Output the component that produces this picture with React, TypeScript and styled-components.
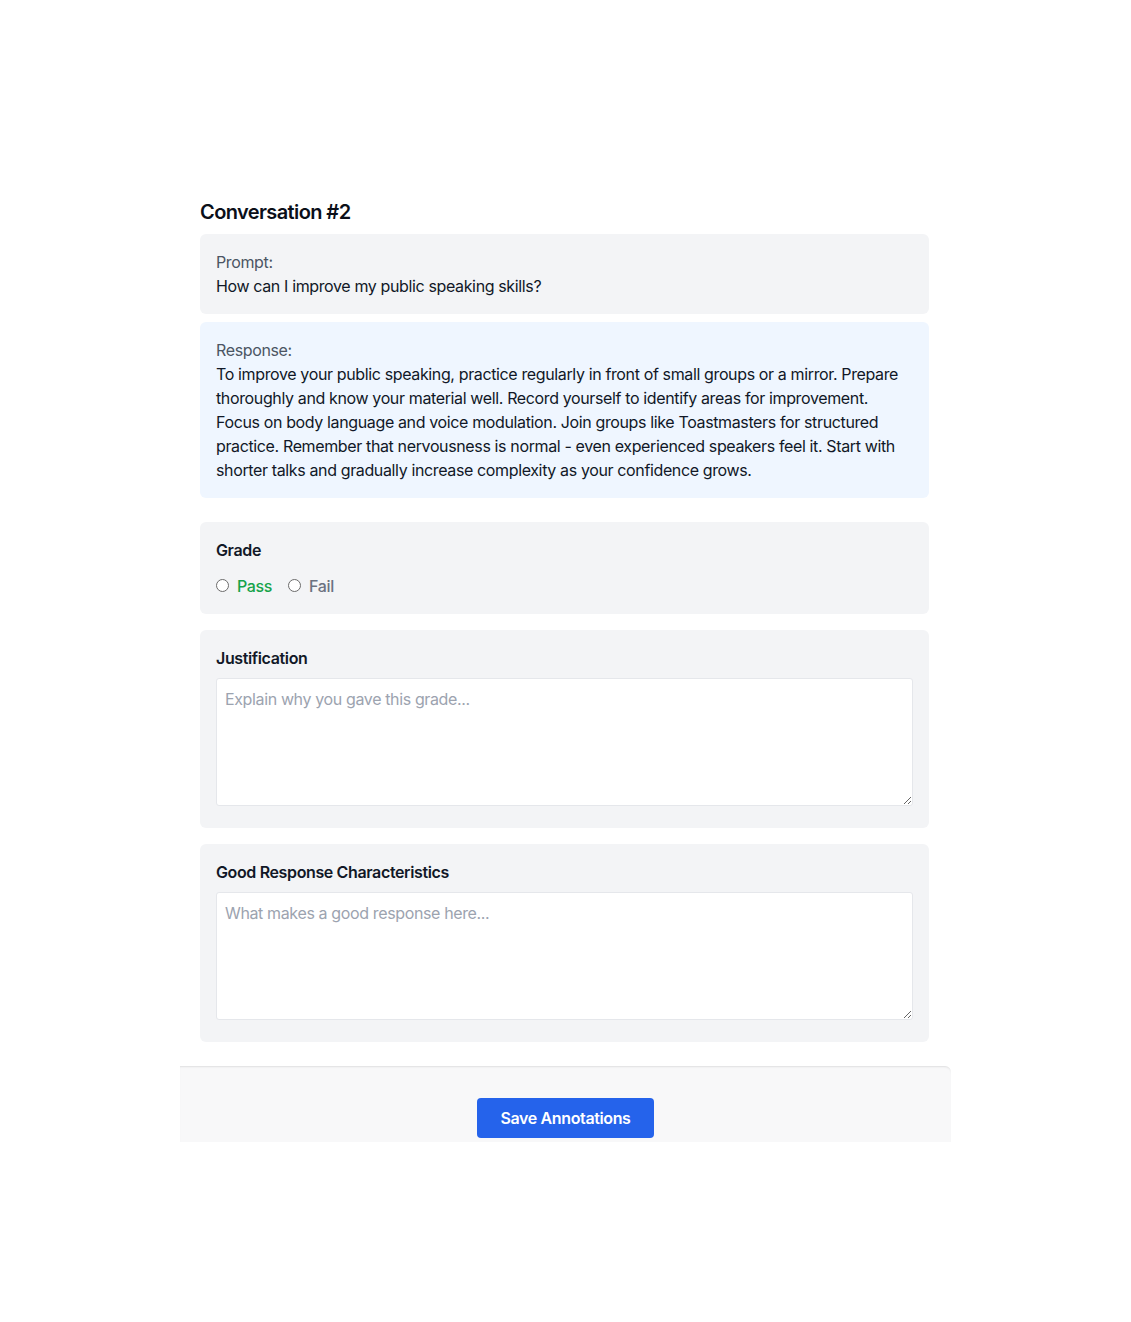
import React from "react";
import styled, { createGlobalStyle } from "styled-components";

const Global = createGlobalStyle`
  html, body { margin: 0; padding: 0; background: #ffffff; }
  body { font-family: Inter, "Noto Sans", sans-serif; color: #111827; -webkit-font-smoothing: antialiased; letter-spacing: -0.023em; }
  * { box-sizing: border-box; }
`;

const Page = styled.div`
  min-height: 100vh;
  padding-bottom: 2px;
  display: flex;
  flex-direction: column;
  align-items: center;
  justify-content: center;
`;

const Shell = styled.div`
  width: 771px;
  display: flex;
  flex-direction: column;
`;

const Card = styled.div`
  background: #ffffff;
  border-radius: 8px;
  padding: 19px 22px 24px 20px;
  display: flex;
  flex-direction: column;
`;

const Title = styled.h2`
  margin: 0 0 8px;
  font-size: 20px;
  line-height: 28px;
  font-weight: 600;
  letter-spacing: -0.03em;
  color: #0b0f19;
`;

const Block = styled.div<{ $tone?: "gray" | "blue"; $gap?: number; $padBottom?: number }>`
  background: ${(p) => (p.$tone === "blue" ? "#eff6ff" : "#f3f4f6")};
  border-radius: 6px;
  padding: 16px 16px ${(p) => p.$padBottom ?? 16}px;
  margin-top: ${(p) => p.$gap ?? 0}px;
  font-size: 16px;
  line-height: 24px;
`;

const Caption = styled.div`
  color: #4b5563;
`;

const Body = styled.div`
  color: #111827;
`;

const FieldLabel = styled.div<{ $mb: number }>`
  font-weight: 600;
  font-size: 16px;
  line-height: 24px;
  color: #111827;
  margin-bottom: ${(p) => p.$mb}px;
`;

const Radios = styled.div`
  display: flex;
  align-items: center;
  gap: 16px;
`;

const RadioLabel = styled.label<{ $color: string }>`
  display: flex;
  align-items: center;
  gap: 8px;
  font-weight: 500;
  color: ${(p) => p.$color};
  cursor: pointer;
`;

const Radio = styled.input`
  appearance: none;
  width: 13px;
  height: 13px;
  margin: 0;
  border: 1px solid #6b6b6b;
  border-radius: 50%;
  background: #fff;
`;

const TextArea = styled.textarea`
  display: block;
  width: 100%;
  height: 128px;
  border: 1px solid #e5e7eb;
  border-radius: 3px;
  padding: 8px;
  font-family: Inter, "Noto Sans", sans-serif;
  font-size: 16px;
  line-height: 24px;
  letter-spacing: -0.023em;
  color: #111827;
  background: #fff;
  resize: vertical;
  outline: none;
  &::placeholder { color: #9ca3af; }
`;

const Footer = styled.div`
  height: 76px;
  background: #f8f8f9;
  box-shadow: inset 0 2px 2px -1px rgba(0, 0, 0, 0.1);
  border-top-right-radius: 6px;
  display: flex;
  justify-content: center;
  align-items: flex-start;
  padding-top: 32px;
`;

const SaveButton = styled.button`
  height: 40px;
  padding: 0 23px;
  background: #2563eb;
  color: #ffffff;
  border: none;
  border-radius: 4px;
  font-family: Inter, "Noto Sans", sans-serif;
  font-size: 16px;
  font-weight: 600;
  letter-spacing: -0.023em;
  cursor: pointer;
`;

export default function App() {
  return (
    <Page>
      <Global />
      <Shell>
        <Card>
          <Title>Conversation #2</Title>
          <Block $tone="gray">
            <Caption>Prompt:</Caption>
            <Body>How can I improve my public speaking skills?</Body>
          </Block>
          <Block $tone="blue" $gap={8}>
            <Caption>Response:</Caption>
            <Body>
              To improve your public speaking, practice regularly in front of small groups or a mirror. Prepare
              thoroughly and know your material well. Record yourself to identify areas for improvement. Focus on
              body language and voice modulation. Join groups like Toastmasters for structured practice. Remember
              that nervousness is normal - even experienced speakers feel it. Start with shorter talks and gradually
              increase complexity as your confidence grows.
            </Body>
          </Block>
          <Block $gap={24}>
            <FieldLabel $mb={12}>Grade</FieldLabel>
            <Radios>
              <RadioLabel $color="#16a34a">
                <Radio type="radio" name="grade" value="pass" />
                Pass
              </RadioLabel>
              <RadioLabel $color="#6b7280">
                <Radio type="radio" name="grade" value="fail" />
                Fail
              </RadioLabel>
            </Radios>
          </Block>
          <Block $gap={16} $padBottom={22}>
            <FieldLabel $mb={8}>Justification</FieldLabel>
            <TextArea placeholder="Explain why you gave this grade..." />
          </Block>
          <Block $gap={16} $padBottom={22}>
            <FieldLabel $mb={8}>Good Response Characteristics</FieldLabel>
            <TextArea placeholder="What makes a good response here..." />
          </Block>
        </Card>
        <Footer>
          <SaveButton>Save Annotations</SaveButton>
        </Footer>
      </Shell>
    </Page>
  );
}
